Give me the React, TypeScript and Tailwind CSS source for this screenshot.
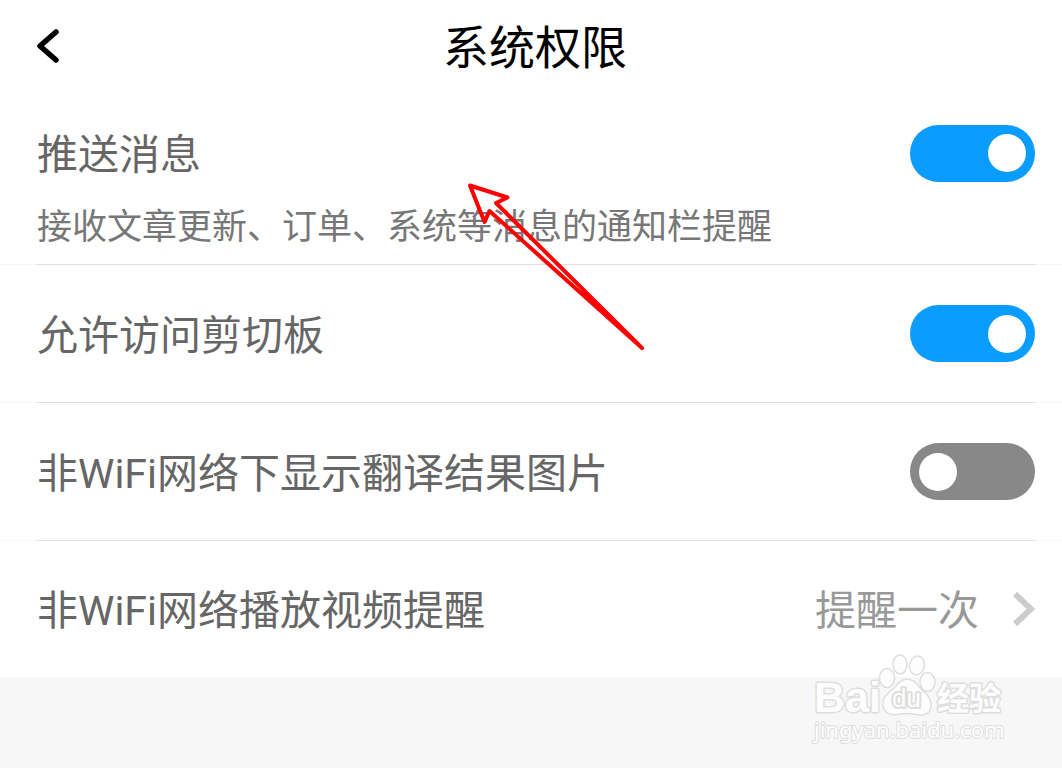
import React from 'react';

type RowProps = {
  children: React.ReactNode;
  last?: boolean;
};

const Row = ({ children, last }: RowProps) => (
  <li className="bg-white">
    {children}
    {!last && (
      <div className="bg-[#f7f7f7] pl-[37px] pr-[27px]">
        <div className="h-px bg-[#dfdfdf]"></div>
      </div>
    )}
  </li>
);

type SwitchProps = {
  id: string;
  defaultChecked?: boolean;
};

const Switch = ({ id, defaultChecked }: SwitchProps) => (
  <input
    id={id}
    type="checkbox"
    role="switch"
    defaultChecked={defaultChecked}
    className="flex h-[57px] w-[125px] shrink-0 cursor-pointer appearance-none items-center rounded-full bg-[#888888] px-[9px] before:size-[38px] before:rounded-full before:bg-white before:content-[''] checked:justify-end checked:bg-[#0a9cff]"
  />
);

const Watermark = () => (
  <svg
    className="pointer-events-none absolute right-[52px] -top-7 h-[100px] w-[205px]"
    viewBox="0 0 205 100"
    fill="#fdfdfd"
    stroke="#dedede"
    strokeLinejoin="round"
    aria-hidden="true"
  >
    <g strokeWidth="1.5">
      <ellipse cx="82" cy="29" rx="7.5" ry="9.5" />
      <ellipse cx="95" cy="15.5" rx="7" ry="9.5" />
      <ellipse cx="112" cy="16.5" rx="7.5" ry="9.5" transform="rotate(10 112 16.5)" />
      <ellipse cx="122.5" cy="33" rx="7.5" ry="9.5" />
      <path d="M102 30c5 0 8.500 3 11.500 7 4 5 12 10 12.500 17 1 7-3 12-10 12-6 0-8-1.500-14-1.500S95 65.500 88 65.500c-7 0-11-6-10-13 1-7 8-10 12.500-15 3.500-4.500 6.500-7.500 11.500-7.500z" />
    </g>
    <g style={{ paintOrder: 'stroke' }}>
      <text x="9" y="63" fontSize="43" fontWeight="700" fontFamily="'Liberation Sans', sans-serif" strokeWidth="3">Bai</text>
      <text x="87" y="58" fontSize="26" fontFamily="'Liberation Sans', sans-serif" strokeWidth="4">du</text>
      <text x="132" y="61" fontSize="32" fontWeight="700" fontFamily="'Noto Sans CJK SC', sans-serif" strokeWidth="3">经验</text>
      <text x="9" y="89" fontSize="22" fontFamily="'Noto Sans', sans-serif" strokeWidth="2">jingyan.baidu.com</text>
    </g>
  </svg>
);

export default function App() {
  return (
    <div className="relative min-h-screen overflow-hidden bg-[#f7f7f7] [font-family:Roboto,'Noto_Sans_CJK_SC',sans-serif] text-[41px] leading-[56px] text-[#666666]">
      <header className="grid h-[92px] grid-cols-[1fr_auto_1fr] items-center bg-white pl-9 pr-7 text-black">
        <button type="button" aria-label="返回" className="w-6">
          <svg viewBox="0 0 24 36" className="h-9 w-6" fill="none" stroke="currentColor" strokeWidth="5.5" strokeLinecap="round" strokeLinejoin="round">
            <path d="M20 4 4 18l16 14" />
          </svg>
        </button>
        <h1 className="pt-1 text-[46px]">系统权限</h1>
      </header>

      <main>
        <ul>
          <Row>
            <div className="flex items-center justify-between pl-[37px] pr-[27px] pt-[31px]">
              <label htmlFor="push" className="pt-1">推送消息</label>
              <Switch id="push" defaultChecked />
            </div>
            <p className="pb-[10px] pl-[37px] pt-[19px] text-[35px] leading-[52px] text-[#777777]">
              接收文章更新、订单、系统等消息的通知栏提醒
            </p>
          </Row>
          <Row>
            <div className="flex h-[137px] items-center justify-between pl-[37px] pr-[27px]">
              <label htmlFor="clipboard" className="pt-1">允许访问剪切板</label>
              <Switch id="clipboard" defaultChecked />
            </div>
          </Row>
          <Row>
            <div className="flex h-[137px] items-center justify-between pl-[37px] pr-[27px]">
              <label htmlFor="images" className="pt-1">非WiFi网络下显示翻译结果图片</label>
              <Switch id="images" />
            </div>
          </Row>
          <Row last>
            <button type="button" className="flex h-[136px] w-full items-center justify-between pl-[37px] pr-[27px] text-left">
              <span className="pt-1">非WiFi网络播放视频提醒</span>
              <span className="flex items-center gap-[34px] text-[#999999]">
                <span className="pt-1">提醒一次</span>
                <svg viewBox="0 0 22 36" className="h-9 w-[22px]" fill="none" stroke="#cccccc" strokeWidth="6">
                  <path d="M2 3 18 18 2 33" />
                </svg>
              </span>
            </button>
          </Row>
        </ul>
      </main>

      <footer className="relative h-[91px]">
        <Watermark />
      </footer>

      {/* Pointer arrow over the first row */}
      <svg
        className="pointer-events-none absolute left-[460px] top-[175px] h-[185px] w-[195px]"
        viewBox="0 0 195 185"
        fill="none"
        stroke="#ff0000"
        strokeWidth="4"
        strokeLinejoin="round"
        aria-hidden="true"
      >
        <path d="M10 10.500 47.500 22.500 36 28 182 173 29.500 36 24.500 47z" />
      </svg>
    </div>
  );
}
